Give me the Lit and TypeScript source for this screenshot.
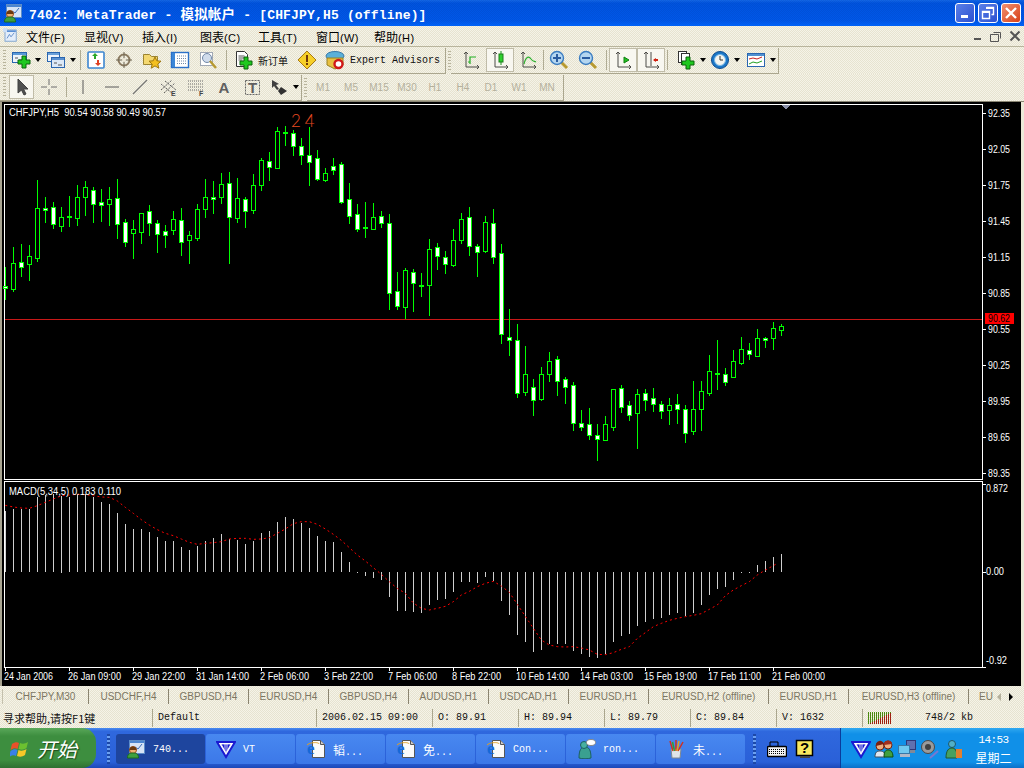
import { LitElement, html, css, svg } from "lit";
import { customElement } from "lit/decorators.js";

type C = [number, number, number, number, string];
const A: C[] = [
  [472,528,534,570,"F"],[411,460,536,546,"H"],[403,457,470,501,"F"],[405,439,461,513,"H"],[210,295,443,456,"H"],[261,295,299,339,"F"],
  [277,292,341,357,"F"],[291,322,347,366,"H"],[258,319,321,351,"F"],[225,262,323,348,"H"],[213,232,260,318,"H"],[232,241,281,339,"F"],
  [237,277,284,336,"F"],[232,268,281,348,"H"],[207,265,341,387,"F"],[327,337,395,411,"F"],[331,358,368,447,"H"],[310,310,365,402,"H"],
  [285,304,338,378,"F"],[331,340,371,429,"F"],[346,364,374,414,"F"],[304,328,359,375,"H"],[295,331,395,438,"F"],[364,376,391,462,"H"],
  [282,298,383,393,"H"],[207,262,296,324,"H"],[213,262,266,312,"F"],[190,223,260,282,"H"],[186,220,320,462,"F"],[205,265,323,339,"H"],
  [262,268,302,354,"F"],[193,226,299,312,"H"],[145,151,224,243,"H"],[127,154,170,213,"F"],[52,64,173,177,"H"],[48,66,69,108,"F"],
  [60,70,107,138,"F"],[84,109,134,165,"F"],[50,136,155,228,"F"],[121,145,206,213,"F"],[175,190,209,216,"H"],[144,168,179,195,"F"],
  [157,163,275,282,"F"],[219,268,317,342,"F"],[282,313,356,366,"F"],[277,351,353,384,"F"],[279,322,356,360,"H"],[303,319,338,354,"F"],
  [312,340,548,600,"F"],[487,544,587,600,"F"],[474,481,590,628,"H"],[477,487,518,606,"F"],[489,525,527,561,"F"],[388,418,524,618,"H"],
  [400,412,437,480,"F"],[423,442,461,492,"F"],[358,391,464,471,"H"],[309,328,389,402,"H"],[291,322,407,438,"F"],[402,409,425,501,"F"],
  [319,337,422,429,"H"],[297,340,440,462,"F"],[403,430,671,702,"F"],
];
const B: C[] = [
  [27,112,119,168,"F"],[72,121,278,294,"F"],[138,223,275,288,"H"],[237,262,299,348,"F"],[201,223,296,303,"H"],[156,184,221,246,"H"],
  [168,178,242,288,"F"],[232,238,260,312,"F"],[247,256,368,393,"F"],[331,370,380,393,"F"],[324,373,404,420,"F"],[372,406,416,483,"F"],
  [348,373,419,419,"H"],[268,268,380,393,"H"],[255,265,320,339,"F"],[304,316,344,363,"F"],[267,283,338,447,"H"],[267,280,299,333,"F"],
  [264,295,311,336,"F"],[304,313,332,357,"F"],[294,316,329,375,"H"],[282,313,326,372,"F"],[316,328,398,429,"F"],[243,328,392,405,"H"],
  [243,274,326,393,"H"],[165,214,278,288,"H"],[120,219,221,270,"F"],[205,223,245,258,"F"],[150,184,231,234,"H"],[111,148,188,195,"H"],
  [129,151,161,180,"F"],[87,115,167,171,"H"],[111,114,119,144,"F"],[66,85,113,150,"H"],[72,79,89,108,"H"],
];
const hist = [108,102,102,102,66,60,57,62,66,57,57,66,81,87,114,147,162,162,171,186,198,198,216,225,213,198,189,177,192,195,207,198,174,168,141,126,132,144,159,183,198,201,231,261,290,305,309,315,366,408,
  408,411,414,390,375,372,351,321,321,324,306,318,378,420,480,501,531,525,507,507,507,528,537,546,549,537,501,483,477,453,441,432,429,420,414,423,414,390,360,342,336,315,293,295,270,258,246,237];
const sigA = [[16,91],[40,96],[64,99],[88,100],[112,92],[136,82],[160,72],[184,62],[208,60],[232,58],[256,59],[280,62],[304,66],[328,67],[352,78],[376,97],[400,115],[424,134],[448,150],[472,164],[496,175],[520,182],[544,192],[568,202],[592,208],[616,205],[640,203],[664,200],[688,192],[712,190],[736,190],[760,193],[784,192],[808,188],[832,175],[856,162],[880,146],[904,140],[928,140],[952,148],[976,162],[1000,178],[1024,196],[1048,218],[1072,240],[1096,258],[1120,278],[1144,298]];
const sigB = [[0,322],[22,340],[46,355],[70,384],[94,400],[118,405],[142,400],[166,394],[190,380],[214,360],[238,349],[262,335],[286,325],[310,319],[334,333],[358,352],[382,388],[406,424],[430,460],[454,495],[478,510],[502,515],[526,516],[550,515],[574,519],[598,525],[622,538],[646,539],[670,533],[694,523],[718,515],[742,490],[766,473],[790,455],[814,445],[838,436],[862,430],[886,425],[910,421],[934,416],[958,403],[982,390],[1006,362],[1030,345],[1054,332],[1078,320],[1102,300],[1126,285],[1150,272],[1162,265]];
const prices: [string, number][] = [["92.35",113],["92.05",149],["91.75",185],["91.45",221],["91.15",257],["90.85",293],["90.55",329],["90.25",365],["89.95",401],["89.65",437],["89.35",473]];
const dates = ["24 Jan 2006","26 Jan 09:00","29 Jan 22:00","31 Jan 14:00","2 Feb 06:00","3 Feb 22:00","7 Feb 06:00","8 Feb 22:00","10 Feb 14:00","14 Feb 03:00","15 Feb 19:00","17 Feb 11:00","21 Feb 00:00"];
const tabs: [string, string][] = [["CHFJPY,M30","t87"],["USDCHF,H4","t80"],["GBPUSD,H4","t80"],["EURUSD,H4","t80"],["GBPUSD,H4","t80"],["AUDUSD,H1","t80"],["USDCAD,H1","t80"],["EURUSD,H1","t80"],["EURUSD,H2 (offline)","t120"],["EURUSD,H1","t80"],["EURUSD,H3 (offline)","t120"]];

const candle = (c: C, i: number, x0: number, base: number) => {
  const x = x0 + 8 * i;
  const Y = (z: number) => Math.round(base + z / 3);
  const y0 = Y(c[1]), y1 = Y(c[2]), h = Math.max(y1 - y0 + 1, 2);
  return svg`<rect x=${x} y=${Y(c[0])} width="1" height=${Y(c[3]) - Y(c[0])} fill="#0f0"/>
    <rect x=${x - 2} y=${y0} width="5" height=${h} fill="#0f0"/>
    ${h > 2 ? svg`<rect x=${x - 1} y=${y0 + 1} width="3" height=${h - 2} fill=${c[4] === "F" ? "#fff" : "#000"}/>` : ""}`;
};

const ico = (c: unknown) => html`<svg class="ic" width="20" height="20" viewBox="0 0 20 20">${c}</svg>`;
const plus = (x: number, y: number) => svg`<path d="M${x - 2} ${y - 6}h4v4h4v4h-4v4h-4v-4h-4v-4h4z" fill="#1fc81f" stroke="#0a640a"/>`;
const axes = svg`<path d="M5 2v15h13M3 4l2-2 2 2M16 15l2 2-2 2" fill="none" stroke="#4c4c48"/>`;
const mag = (sign: string) => svg`<path d="M12 12l6 6" stroke="#b89a30" stroke-width="3"/><circle cx="8" cy="8" r="6.5" fill="#b4d6f0" stroke="#3a7cc0" stroke-width="1.4"/><path d=${sign} stroke="#2a5ca0" stroke-width="2"/>`;
const mtWin = svg`<rect x="3.5" y="1.5" width="15" height="13" fill="#d6e4f6" stroke="#5c8cc8"/><rect x="4" y="2" width="14" height="2" fill="#4c86d0"/><path d="M6 12l3-4 3 2 4-5" fill="none" stroke="#3a6cb8"/>`;
const person = svg`<circle cx="7" cy="11" r="3.5" fill="#f0b070" stroke="#a05020"/><path d="M7 7.5a3.5 3.5 0 0 1 3.5 3.5h-7a3.5 3.5 0 0 1 3.5-3.5z" fill="#6a3a10"/><path d="M1.5 19c0-4 2-5 5.5-5s5.5 1 5.5 5z" fill="#3fa03f" stroke="#1c6c1c"/>`;
const vt = svg`<path d="M1 3h18L10 18z" fill="#fff" stroke="#1a1ad0" stroke-width="2"/><path d="M5 5h10L10 14zM9 5v8M11 5v8" fill="#1a1ad0" stroke="#fff" stroke-width=".8"/>`;
const iedoc = svg`<path d="M6.5 1.5h8l4 4v13h-12z" fill="#fafafa" stroke="#555"/><path d="M14.5 1.5v4h4" fill="#ccc" stroke="#555"/><text x="1" y="15" class="ie">e</text><path d="M1 6c3-3 12-3 12-1" fill="none" stroke="#e0a020"/>`;

const icons: Record<string, unknown> = {
  mt: svg`${mtWin}${person}`,
  mtdoc: svg`<rect x="2.5" y="2.5" width="14" height="14" fill="#e4eefa" stroke="#6a96cc"/><rect x="3" y="3" width="13" height="2" fill="#5a90d4"/><path d="M5 13l3-5 2 3 4-5" fill="none" stroke="#4a7cc0"/><rect x="0" y="0" width="5" height="5" fill="#cfe0f5"/>`,
  newchart: svg`<rect x="1.5" y="2.5" width="14" height="10" fill="#eef4fb" stroke="#2a66b0"/><rect x="2" y="3" width="13" height="2" fill="#5a9ad8"/><path d="M4 8h3M8 10h4" stroke="#555"/>${plus(13, 12)}`,
  profiles: svg`<rect x="1.5" y="2.5" width="12" height="9" fill="#eef4fb" stroke="#2a66b0"/><rect x="2" y="3" width="11" height="2" fill="#6aa0d8"/><rect x="5.5" y="7.5" width="13" height="10" fill="#dce8f6" stroke="#2a66b0"/><rect x="6" y="8" width="12" height="2" fill="#5a90d0"/><path d="M8 13h3M12 15h4" stroke="#555"/>`,
  market: svg`<rect x="2" y="2" width="16" height="16" rx="1" fill="#fff" stroke="#3d86d0" stroke-width="1.6"/><path d="M8 9V6H6l3-3 3 3h-2v3z" fill="#2aa82a"/><path d="M11 10v3H9l3 3 3-3h-2v-3z" fill="#e04020"/>`,
  nav: svg`<circle cx="10" cy="10" r="5.5" fill="none" stroke="#8a7a60" stroke-width="2"/><path d="M10 2v16M2 10h16" stroke="#6c6450"/><circle cx="10" cy="10" r="2" fill="#eee9d8"/>`,
  fav: svg`<path d="M1.5 4.5h6l2 2h6v8h-14z" fill="#f4d870" stroke="#9c8430"/><path d="M13 7l1.8 3.8 4.2.4-3.2 2.8 1 4.2-3.8-2.3-3.8 2.3 1-4.2L7 11.2l4.2-.4z" fill="#f4c020" stroke="#a07810"/>`,
  term: svg`<rect x="1.5" y="2.5" width="17" height="15" fill="#fff" stroke="#2a70c8" stroke-width="1.4"/><rect x="2" y="3" width="3" height="14" fill="#3a86d8"/><path d="M7 6h9M7 8.5h9M7 11h9M7 13.5h9" stroke="#7088a8" stroke-dasharray="1 1"/>`,
  tester: svg`<rect x="2.5" y="2.5" width="12" height="13" fill="#fff" stroke="#a0a8b4"/><circle cx="9" cy="8" r="4.5" fill="#d0dcec" stroke="#7088a8"/><path d="M12 11l6 7" stroke="#b89a30" stroke-width="2.4"/>`,
  order: svg`<path d="M3.5 1.5h8l3 3v12h-11z" fill="#fff" stroke="#333"/><path d="M5.5 6h6M5.5 8h6M5.5 10h4" stroke="#555"/>${plus(13, 13)}`,
  warn: svg`<path d="M10 1l9 9-9 9-9-9z" fill="#f6cf28" stroke="#a87810"/><rect x="9" y="5" width="2" height="7" fill="#703808"/><rect x="9" y="13" width="2" height="2" fill="#703808"/>`,
  ea: svg`<ellipse cx="10" cy="6" rx="9" ry="4.5" fill="#5ab0d8" stroke="#3878a8"/><path d="M2 8h16v7l-8 4-8-4z" fill="#e8c040" stroke="#988020"/><circle cx="13.5" cy="14" r="4" fill="#fff" stroke="#d01818" stroke-width="2.4"/>`,
  bar: svg`${axes}<path d="M9 14V7h4" fill="none" stroke="#22b022" stroke-width="1.2"/><path d="M7 12h2M13 7h2" stroke="#22b022"/>`,
  cnd: svg`${axes}<path d="M11 1v14" stroke="#1a901a"/><rect x="9" y="4" width="4" height="8" fill="#2ed02e" stroke="#1a801a"/>`,
  line: svg`${axes}<path d="M6 14c2-8 5-8 7-5s3 2 5 3" fill="none" stroke="#30b030" stroke-width="1.2"/>`,
  zin: mag("M4 8h8M8 4v8"),
  zout: mag("M4 8h8"),
  scroll: svg`${axes}<path d="M11 7l5 3-5 3z" fill="#22c022" stroke="#118011"/>`,
  shift: svg`${axes}<path d="M10 2v14" stroke="#4c4c48"/><path d="M12 10l3-2v4z" fill="#d02010"/><rect x="13" y="9" width="4" height="2" fill="#d02010"/>`,
  newdoc: svg`<rect x="2.5" y="1.5" width="8" height="11" fill="#fff" stroke="#333"/><rect x="5.5" y="3.5" width="8" height="11" fill="#fff" stroke="#333"/>${plus(12, 13)}`,
  clock: svg`<circle cx="10" cy="10" r="8.5" fill="#1c78c8" stroke="#0f4c90"/><circle cx="10" cy="10" r="5.5" fill="#f6f6f0" stroke="#7ab8e8"/><path d="M10 6v4h3" fill="none" stroke="#333"/>`,
  tpl: svg`<rect x="1.5" y="3.5" width="17" height="13" fill="#fff" stroke="#2a66b0"/><rect x="2" y="4" width="16" height="2" fill="#5090d0"/><path d="M3 9l4-1 4 1 5-2" fill="none" stroke="#c82020"/><path d="M3 14l4-2 4 1 5-2" fill="none" stroke="#22a022"/>`,
  cursor: svg`<path d="M6 2v14l3.5-3 2.5 5 2-1-2.5-5H16z" fill="#505050" stroke="#404040"/>`,
  cross: svg`<path d="M10 2v6M10 12v6M2 10h6M12 10h6" stroke="#6c6c6c"/>`,
  vl: svg`<path d="M10 3v14" stroke="#585858"/>`,
  hl: svg`<path d="M3 10h14" stroke="#585858"/>`,
  dl: svg`<path d="M3 17L17 3" stroke="#787878" stroke-width="1.2"/>`,
  chan: svg`<path d="M3 13L14 3M6 16L17 6M3 7l12 10M7 4l11 9" stroke="#606060" stroke-dasharray="2 1"/><text x="13" y="19" class="mini">E</text>`,
  fib: svg`<path d="M2 4h15M2 7h15M2 10h15M2 13h15" stroke="#686868" stroke-dasharray="1 1"/><text x="13" y="19" class="mini">F</text>`,
  letter: svg`<text x="10" y="16" class="big">A</text>`,
  tbox: svg`<rect x="3.5" y="3.5" width="14" height="14" fill="none" stroke="#666" stroke-dasharray="2 1"/><text x="10.5" y="16" class="big">T</text>`,
  arrows: svg`<path d="M3 3l7 4-3 1 3 4-2 1-3-4-2 2z" fill="#404040"/><path d="M12 10l6 4-6 4-3-4z" fill="#303030"/>`,
  win: svg`<path d="M2 6c3-2 5-2 7-1l-1.500 6c-2-1-4-1-7 1z" fill="#e8502a"/><path d="M10 5c2 1 5 1 8-1l-1.500 6c-3 2-5 2-8 1z" fill="#6cc030"/><path d="M.5 13c3-2 5-2 7-1L6 18c-2-1-4-1-7 1z" fill="#3a80e8"/><path d="M8.500 12c2 1 5 1 8-1L15 17c-3 2-5 2-8 1z" fill="#f8c828"/>`,
  vt,
  ie: iedoc,
  msn: svg`<path d="M3 19c0-8 2-11 6-11s6 3 6 11c-3 1-9 1-12 0z" fill="#3aa090" stroke="#1c6060"/><circle cx="8" cy="6" r="3.500" fill="#48b0a0" stroke="#1c6060"/><ellipse cx="15" cy="3.500" rx="4.500" ry="3" fill="#fff" stroke="#888"/>`,
  paint: svg`<path d="M5 10h10l-1 9H6z" fill="#dfe4e8" stroke="#808890"/><path d="M7 12L4 2M10 12V1M12 12l5-9" stroke="#d03020" stroke-width="1.500"/><path d="M8.500 12L6.500 3" stroke="#30a030" stroke-width="1.500"/><path d="M11 12l2-10" stroke="#e0a020" stroke-width="1.500"/>`,
  kbd: svg`<rect x="0.500" y="7.500" width="19" height="10" rx="1" fill="#f4f4f4" stroke="#000" stroke-width="1.400"/><path d="M2 10.500h16M2 12.500h16M2 14.500h16" stroke="#000" stroke-dasharray="1 1"/><path d="M3 7V3h8v4" fill="none" stroke="#000"/>`,
  help: svg`<rect x="1.500" y="1.500" width="16" height="15" fill="#f8e860" stroke="#000" stroke-width="1.500"/><text x="9.500" y="14" class="q">?</text><rect x="5" y="17" width="10" height="2" fill="#444"/>`,
  people: svg`<circle cx="6" cy="7" r="4" fill="#f0b080" stroke="#702010"/><path d="M2 7a4 4 0 0 1 8-2z" fill="#7a2010"/><circle cx="14" cy="6" r="4" fill="#f0b080" stroke="#702010"/><path d="M10 6a4 4 0 0 1 8-1z" fill="#a03020"/><path d="M1 18c0-5 2-6 5-6s5 1 5 6z" fill="#e0e8f0" stroke="#405060"/><path d="M10 18c0-6 2-7 4-7s5 1 5 7z" fill="#40a040" stroke="#105010"/>`,
  pcs: svg`<rect x="9.500" y="1.500" width="9" height="9" fill="#6070b0" stroke="#303878"/><rect x="1.500" y="6.500" width="11" height="8" fill="#70c8f0" stroke="#3878a8"/><rect x="3" y="15" width="10" height="3" fill="#b0b8c8"/><rect x="13" y="11" width="5" height="3" fill="#808898"/>`,
  spk: svg`<circle cx="8" cy="8" r="6.500" fill="#9a9a9a" stroke="#484848"/><circle cx="8" cy="8" r="3" fill="#404040"/><path d="M10 19l8-7" stroke="#7878d0" stroke-width="2"/>`,
  bud: svg`<circle cx="9" cy="5" r="3.500" fill="#50b0c8" stroke="#205868"/><path d="M3 19c0-8 3-10 6-10s5 2 5 10z" fill="#48a060" stroke="#205830"/><rect x="13" y="10" width="6" height="9" fill="#e08030"/>`,
};

@customElement("app-root")
export class AppRoot extends LitElement {
  static styles = css`
    :host { display: block; width: 1024px; height: 768px; overflow: hidden; font-family: "Liberation Sans", sans-serif; background: #ece9d8; }
    .col { display: flex; flex-direction: column; width: 1024px; height: 768px; }
    .ic { display: block; flex: none; }
    .beige { background: repeating-conic-gradient(#e6e3d0 0 25%, #f5f3e8 0 50%) 0 0 / 2px 2px; }

    .title { height: 26px; flex: none; display: flex; align-items: center; padding: 0 3px 0 3px; box-sizing: border-box;
      background: repeating-conic-gradient(rgba(0,0,40,.07) 0 25%, transparent 0 50%) 0 0 / 2px 2px, linear-gradient(#1468e8, #0054e0 12%, #0058ea 80%, #0066ff); }
    .title .cap { margin-left: 6px; font: bold 13px "Liberation Mono", "Noto Sans CJK SC", monospace; letter-spacing: .17px; color: #fff; white-space: pre; }
    .title .cn { font: bold 13.5px "Noto Sans CJK SC", sans-serif; letter-spacing: .2px; }
    .title .sp { flex: 1; }
    .wb { width: 20px; height: 20px; margin-left: 3px; box-sizing: border-box; border: 1px solid #fff; border-radius: 3px; display: flex; align-items: center; justify-content: center; background: linear-gradient(135deg,#5a80e8,#2c50d0); }
    .wb.x { background: linear-gradient(135deg,#f09070,#d84018); }
    .wb svg { display: block; }

    .menu { height: 21px; flex: none; display: flex; align-items: center; padding-left: 3px; box-sizing: border-box; border-bottom: 1px solid #b8b49c; font: 12px "Noto Sans CJK SC", sans-serif; color: #000; }
    .menu .m0 { width: 23px; }
    .menu .m { width: 58px; white-space: pre; }
    .menu .m span { font: 11px "Liberation Sans", sans-serif; letter-spacing: .4px; }
    .menu .sp { flex: 1; }
    .cb { width: 18.5px; display: flex; justify-content: center; }

    .row { height: 27px; flex: none; display: flex; align-items: center; box-sizing: border-box; }
    .tb { display: flex; align-items: center; height: 26px; border-right: 1px solid #aaa68e; border-bottom: 1px solid #aaa68e; box-sizing: border-box; }
    .w446 { width: 446px; } .w328 { width: 328px; } .w302 { width: 302px; } .w257 { width: 257px; }
    .h { width: 3px; height: 20px; margin-left: 3px; background: repeating-linear-gradient(#b8b49c 0 1px, transparent 0 3px); }
    .sep { width: 1px; height: 20px; background: #b0ac94; }
    .b { width: 28px; height: 24px; display: flex; align-items: center; justify-content: center; flex: none; box-sizing: border-box; }
    .pr { outline: 1px solid #c0bca8; outline-offset: -1px; background: #f8f7f0; }
    .dr { height: 24px; display: flex; align-items: center; flex: none; box-sizing: border-box; }
    .ar { width: 0; height: 0; border: 3px solid transparent; border-top: 4px solid #000; border-bottom: 0; margin-left: 4px; }
    .txt { flex: none; white-space: pre; color: #111; }
    .t1 { width: 32px; font: 10px "Noto Sans CJK SC", sans-serif; margin-left: 1px; }
    .t2 { width: 92px; font: 10px "Liberation Mono", monospace; margin-left: 1px; letter-spacing: 0; }
    .per { font-size: 10px; color: #b4b09c; }
    .ml1 { margin-left: 1px; } .ml2 { margin-left: 2px; } .ml3 { margin-left: 3px; } .ml4 { margin-left: 4px; }
    .p5 { padding-left: 5px; } .p3 { padding-left: 3px; } .w35 { width: 35px; } .w38 { width: 38px; } .w33 { width: 33px; } .w36 { width: 36px; } .w31 { width: 31px; } .w25 { width: 25px; } .w27 { width: 27px; }

    .edge { height: 1px; flex: none; background: #8a8674; }
    .chart { height: 584px; flex: none; display: block; }
    .chart text { font: 10px "Liberation Sans", sans-serif; fill: #fff; white-space: pre; }
    .chart .lbl { fill: #000; }
    .chart .tf { font: 300 17px Lato, "Liberation Sans", sans-serif; fill: #e84a20; letter-spacing: 4px; }

    .tabs { height: 21px; flex: none; display: flex; align-items: center; font-size: 10px; color: #7c7662; overflow: hidden; }
    .tab { height: 15px; display: flex; align-items: center; justify-content: center; box-sizing: border-box; border-right: 1px solid #8a8470; white-space: nowrap; flex: none; }
    .t87 { width: 87px; margin-left: 2px; border-left: 1px solid #c4c0ac; } .t80 { width: 80px; } .t120 { width: 120px; }
    .tab.last { width: 22px; border: 0; justify-content: flex-start; padding-left: 10px; }
    .nav { display: flex; align-items: center; margin-left: 6px; gap: 8px; }
    .la, .ra { width: 0; height: 0; border: 4px solid transparent; }
    .la { border-right: 4px solid #b4b09c; border-left: 0; }
    .ra { border-left: 4px solid #000; border-right: 0; }

    .status { height: 21px; flex: none; display: flex; align-items: center; font: 10px "Liberation Mono", monospace; color: #111; white-space: pre; }
    .sc { height: 18px; display: flex; align-items: center; box-sizing: border-box; padding-left: 5px; border-left: 1px solid #aaa68e; flex: none; }
    .sc.c0 { width: 152px; border: 0; padding-left: 3px; font: 11px "Noto Sans CJK SC", sans-serif; }
    .w164 { width: 164px; } .w116 { width: 116px; } .w86 { width: 86px; } .grow { flex: 1; }
    .bars { flex: none; }
    .kb { margin-left: 33px; }

    .task { height: 40px; flex: none; display: flex; align-items: center; box-sizing: border-box; background: linear-gradient(#4a8cf0 0, #2f68de 8%, #2a60d8 85%, #1c48b8); color: #fff; }
    .start { width: 96px; height: 40px; flex: none; box-sizing: border-box; display: flex; align-items: center; padding-left: 10px; gap: 7px; border-radius: 0 14px 14px 0;
      background: linear-gradient(#5aa85a, #3d8e3f 20%, #3d8e3f 80%, #2f7031); font: italic 20px "Liberation Serif", "Noto Sans CJK SC", serif; text-shadow: 1px 1px 1px #1c4c1c; }
    .grip { width: 3px; height: 30px; flex: none; background: repeating-linear-gradient(#1c48a8 0 2px, #6ca0f0 0 4px); }
    .g1 { margin: 2px 6px 0 11px; }
    .g2 { margin: 2px 7px 0 7px; }
    .tk { width: 89px; height: 30px; margin: 2px 1px 0 0; flex: none; display: flex; align-items: center; box-sizing: border-box; padding-left: 10px; gap: 7px; border-radius: 3px; background: linear-gradient(#4888f0, #3c78e8); font: 10px "Liberation Mono", monospace; white-space: pre; }
    .tk .cj { font: 12px "Noto Sans CJK SC", sans-serif; }
    .tk.on { background: #1e459e; }
    .ql { width: 28px; display: flex; justify-content: center; flex: none; margin-top: 2px; }
    .tray { margin-left: auto; width: 184px; height: 40px; flex: none; box-sizing: border-box; display: flex; align-items: center; padding: 2px 0 0 10px; gap: 3px; background: linear-gradient(#30a8f0, #1090e8 15%, #1090e8 85%, #0c70c8); border-left: 1px solid #0a3c9c; }
    .clock { margin-left: auto; width: 62px; display: flex; flex-direction: column; align-items: center; padding-right: 3px; font: 11px "Liberation Mono", monospace; letter-spacing: -.6px; line-height: 17px; }
    .clock .c { font: 12px "Noto Sans CJK SC", sans-serif; letter-spacing: 0; line-height: 18px; }
    .ie { font: bold 17px "Liberation Serif", serif; fill: #1468d8; }
    .mini { font: bold 7px "Liberation Sans", sans-serif; fill: #444; }
    .big { font: bold 15px "Liberation Sans", sans-serif; fill: #606060; text-anchor: middle; }
    .q { font: bold 15px "Liberation Sans", sans-serif; fill: #000; text-anchor: middle; }
  `;

  private chart() {
    const sig = sigA.map(p => `${p[0] / 3},${475 + p[1] / 3}`).concat(sigB.map(p => `${390 + p[0] / 3},${475 + p[1] / 3}`)).join(" ");
    return html`<svg class="chart" width="1024" height="584" viewBox="0 102 1024 584" shape-rendering="crispEdges">
      <rect x="0" y="102" width="1024" height="584" fill="#ece9d8"/>
      <rect x="0" y="102" width="2" height="584" fill="#a8a490"/>
      <rect x="2" y="102" width="1019" height="584" fill="#000"/>
      <rect x="4.5" y="104.5" width="978" height="375" fill="none" stroke="#fff"/>
      <rect x="4.5" y="481.5" width="978" height="186" fill="none" stroke="#fff"/>
      <path d="M781 105h9l-4.500 4.500z" fill="#8a90a8"/>
      ${prices.map(p => svg`<rect x="982" y=${p[1]} width="4" height="1" fill="#fff"/><text x="988" y=${p[1] + 4} textLength="22" lengthAdjust="spacingAndGlyphs">${p[0]}</text>`)}
      <rect x="5" y="319" width="977" height="1" fill="#c81818"/>
      <rect x="985" y="313" width="29" height="11" fill="#f00"/>
      <text class="lbl" x="988" y="322" textLength="22" lengthAdjust="spacingAndGlyphs">90.62</text>
      ${A.map((c, i) => candle(c, i, 5, 110))}
      ${B.map((c, i) => candle(c, i, 509, 300))}
      <text x="9" y="116" textLength="157" lengthAdjust="spacingAndGlyphs">CHFJPY,H5  90.54 90.58 90.49 90.57</text>
      <text class="tf" x="291" y="127" shape-rendering="auto">24</text>
      ${hist.map((z, i) => svg`<rect x=${5 + 8 * i} y=${Math.round(475 + Math.min(z, 292) / 3)} width="1" height=${Math.max(Math.round(Math.abs(z - 292) / 3), 1)} fill="#cfcfcf"/>`)}
      <polyline points=${sig} fill="none" stroke="#f00" stroke-dasharray="2 3" shape-rendering="auto"/>
      <text x="9" y="495" textLength="112" lengthAdjust="spacingAndGlyphs">MACD(5,34,5) 0.183 0.110</text>
      ${[484, 572, 667].map(y => svg`<rect x="982" y=${y} width="4" height="1" fill="#fff"/>`)}
      <text x="986" y="492" textLength="22" lengthAdjust="spacingAndGlyphs">0.872</text>
      <text x="986" y="575" textLength="18" lengthAdjust="spacingAndGlyphs">0.00</text>
      <text x="986" y="664" textLength="21" lengthAdjust="spacingAndGlyphs">-0.92</text>
      ${dates.map((d, i) => {
        const x = 5 + 64 * i;
        const w = d.length === 11 ? 49 : 53;
        return svg`<rect x=${x} y="668" width="1" height="3" fill="#fff"/><text x=${x - 1} y="680" textLength=${w} lengthAdjust="spacingAndGlyphs">${d}</text>`;
      })}
    </svg>`;
  }

  render() {
    const b = (n: string, cls = "") => html`<div class="b ${cls}">${ico(icons[n])}</div>`;
    const d = (n: string, cls: string) => html`<div class="dr ${cls}">${ico(icons[n])}<div class="ar"></div></div>`;
    const stat = ["O: 89.91", "H: 89.94", "L: 89.79", "C: 89.84", "V: 1632"];
    const bars = Array.from({ length: 12 }, (_, i) => i);
    return html`<div class="col">
      <div class="title">
        ${ico(icons.mt)}
        <div class="cap">7402: MetaTrader - <span class="cn">模拟帐户</span> - [CHFJPY,H5 (offline)]</div>
        <div class="sp"></div>
        <div class="wb"><svg width="14" height="14" viewBox="0 0 14 14"><rect x="3" y="9" width="7" height="3" fill="#fff"/></svg></div>
        <div class="wb"><svg width="14" height="14" viewBox="0 0 14 14"><path d="M5.500 1.500h7v7h-2M1.500 5.500h7v7h-7z" fill="none" stroke="#fff" stroke-width="1.400"/><rect x="5" y="1" width="8" height="2" fill="#fff"/><rect x="1" y="5" width="8" height="2" fill="#fff"/></svg></div>
        <div class="wb x"><svg width="14" height="14" viewBox="0 0 14 14"><path d="M2 2l10 10M12 2L2 12" stroke="#fff" stroke-width="2.400"/></svg></div>
      </div>
      <div class="menu beige">
        <div class="m0"><svg class="ic" width="16" height="16" viewBox="0 0 20 20">${icons.mtdoc}</svg></div>
        <div class="m">文件<span>(F)</span></div><div class="m">显视<span>(V)</span></div><div class="m">插入<span>(I)</span></div><div class="m">图表<span>(C)</span></div><div class="m">工具<span>(T)</span></div><div class="m">窗口<span>(W)</span></div><div class="m">帮助<span>(H)</span></div>
        <div class="sp"></div>
        <div class="cb"><svg width="12" height="12" viewBox="0 0 12 12"><rect x="2" y="8" width="7" height="2" fill="#555"/></svg></div>
        <div class="cb"><svg width="12" height="12" viewBox="0 0 12 12"><path d="M3.500 2.500h7v6M.5 4.500h8v7h-8z" fill="none" stroke="#555"/></svg></div>
        <div class="cb"><svg width="12" height="12" viewBox="0 0 12 12"><path d="M1.500 1.500l9 9M10.500 1.500l-9 9" stroke="#555" stroke-width="2"/></svg></div>
      </div>
      <div class="row beige">
        <div class="tb w446">
          <div class="h"></div>
          ${d("newchart", "w35 p5")}${d("profiles", "w38 p5")}
          <div class="sep ml1"></div><div class="ml1"></div>
          ${b("market")}${b("nav")}${b("fav")}${b("term")}${b("tester")}
          <div class="sep ml4"></div><div class="ml2"></div>
          ${b("order")}
          <div class="txt t1">新订单</div>
          <div class="ml3"></div>
          ${b("warn")}${b("ea")}
          <div class="txt t2">Expert Advisors</div>
        </div>
        <div class="h ml2"></div>
        <div class="tb w328">
          <div class="ml4"></div><div class="ml2"></div>
          ${b("bar")}${b("cnd", "pr ml1")}${b("line")}
          <div class="sep ml1"></div><div class="ml1"></div>
          ${b("zin")}${b("zout", "ml1")}
          <div class="sep ml4"></div><div class="ml2"></div>
          ${b("scroll", "pr")}${b("shift", "pr")}
          <div class="sep ml2"></div><div class="ml3"></div>
          ${d("newdoc", "w36 p5")}${d("clock", "w36 p3")}${d("tpl", "w33 p3")}
        </div>
      </div>
      <div class="row beige">
        <div class="tb w302">
          <div class="h"></div>
          ${b("cursor", "pr w25 ml3")}${b("cross", "ml1")}
          <div class="sep ml3"></div><div class="ml2"></div>
          ${b("vl")}${b("hl", "ml1")}${b("dl")}${b("chan")}${b("fib", "w27")}${b("letter", "ml1")}${b("tbox")}
          ${d("arrows", "w31 p3")}
        </div>
        <div class="h ml2"></div>
        <div class="tb w257">
          <div class="ml2"></div>
          ${["M1", "M5", "M15", "M30", "H1", "H4", "D1", "W1", "MN"].map(m => html`<div class="b per">${m}</div>`)}
        </div>
      </div>
      <div class="edge"></div>
      ${this.chart()}
      <div class="tabs beige">
        ${tabs.map(t => html`<div class="tab ${t[1]}">${t[0]}</div>`)}
        <div class="tab last">EU</div>
        <div class="nav"><div class="la"></div><div class="ra"></div></div>
      </div>
      <div class="status beige">
        <div class="sc c0">寻求帮助,请按F1键</div>
        <div class="sc w164">Default</div>
        <div class="sc w116">2006.02.15 09:00</div>
        ${stat.map(s => html`<div class="sc w86">${s}</div>`)}
        <div class="sc grow">
          <svg class="bars" width="24" height="12" viewBox="0 0 24 12" shape-rendering="crispEdges">
            ${bars.map(i => svg`<rect x=${i * 2} y="0" width="1" height=${12 - i} fill="#4a8a10"/><rect x=${i * 2} y=${12 - i} width="1" height=${i} fill="#a02010"/>`)}
          </svg>
          <span class="kb">748/2 kb</span>
        </div>
      </div>
      <div class="task">
        <div class="start">${ico(icons.win)}<span>开始</span></div>
        <div class="grip g1"></div>
        <div class="tk on">${ico(icons.mt)}<span>740...</span></div>
        <div class="tk">${ico(icons.vt)}<span>VT</span></div>
        <div class="tk">${ico(icons.ie)}<span><span class="cj">韬</span>...</span></div>
        <div class="tk">${ico(icons.ie)}<span><span class="cj">免</span>...</span></div>
        <div class="tk">${ico(icons.ie)}<span>Con...</span></div>
        <div class="tk">${ico(icons.msn)}<span>ron...</span></div>
        <div class="tk">${ico(icons.paint)}<span><span class="cj">未</span>...</span></div>
        <div class="grip g2"></div>
        <div class="ql">${ico(icons.kbd)}</div>
        <div class="ql">${ico(icons.help)}</div>
        <div class="tray">
          ${ico(icons.vt)}${ico(icons.people)}${ico(icons.pcs)}${ico(icons.spk)}${ico(icons.bud)}
          <div class="clock"><span>14:53</span><span class="c">星期二</span></div>
        </div>
      </div>
    </div>`;
  }
}
